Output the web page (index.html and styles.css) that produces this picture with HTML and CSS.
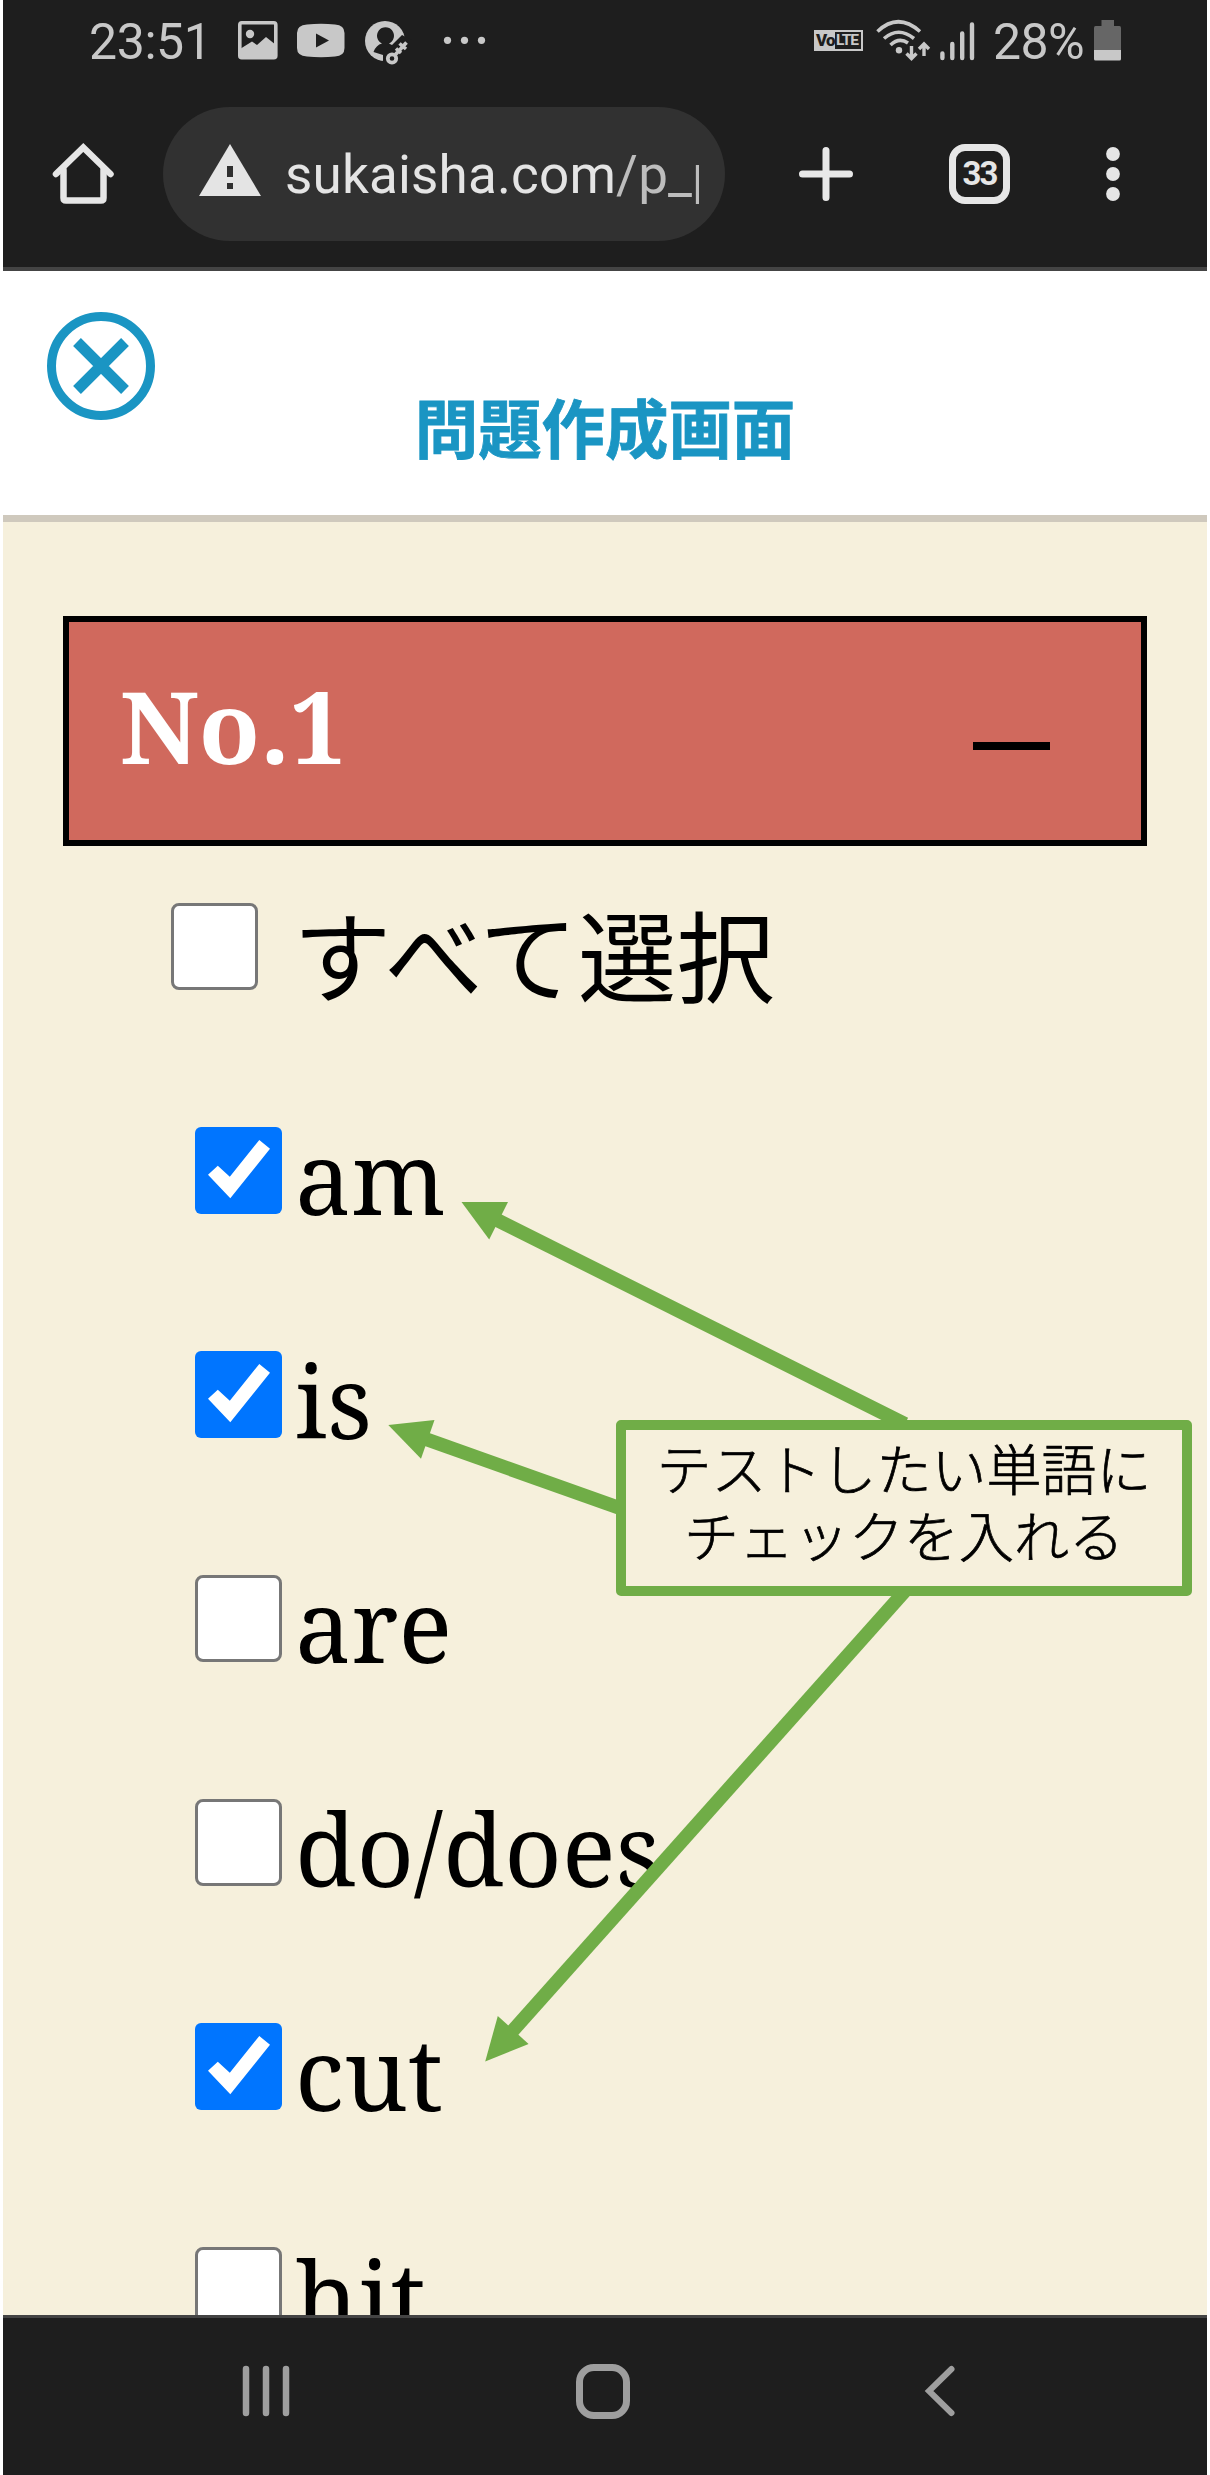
FILE: index.html
```html
<!DOCTYPE html>
<html lang="ja">
<head>
<meta charset="utf-8">
<title>問題作成画面</title>
<link rel="stylesheet" href="styles.css">
</head>
<body>
<div class="screen">
  <div class="statusbar">
    <span class="clock">23:51</span>
    <svg class="notif" width="260" height="80" viewBox="230 0 260 80">
      <rect x="239.8" y="22.8" width="36" height="35" rx="2" fill="none" stroke="#c8c8c8" stroke-width="3.6"/>
      <circle cx="250" cy="34" r="4.2" fill="#c8c8c8"/>
      <path d="M240 49 252 41.500 257 45 266 37 276 45V58H240Z" fill="#c8c8c8"/>
      <path d="M307 24.500Q321 23 335 24.500Q344.500 25 344.500 33V48Q344.500 56 335 56.500Q321 58 307 56.500Q297 56 297 48V33Q297 25 307 24.500Z" fill="#c8c8c8"/>
      <path d="M316 33.500V47.500L329 40.500Z" fill="#1e1e1e"/>
      <circle cx="385" cy="41" r="20" fill="#c8c8c8"/>
      <path d="M373.500 52Q376 45 382 43.500A8.500 8.500 0 1 1 389 43.500L392 45 402 35 412 40V66H383V55Z" fill="#1e1e1e"/>
      <circle cx="392" cy="58.500" r="4.200" fill="none" stroke="#c8c8c8" stroke-width="3.800"/>
      <path d="M395 55 406.500 42.500M399.500 43.500 406 49M396 48.500 401 53" fill="none" stroke="#c8c8c8" stroke-width="3.600"/>
      <g fill="#c8c8c8"><circle cx="447.500" cy="40.300" r="3.600"/><circle cx="464.500" cy="40.300" r="3.600"/><circle cx="481.500" cy="40.300" r="3.600"/></g>
    </svg>
    <span class="volte"><b>Vo</b><i>LTE</i></span>
    <svg class="signal" width="106" height="80" viewBox="873 0 106 80" fill="none" stroke="#c8c8c8">
      <path d="M877.500 31.500Q898 12 920 31.500M884 38.500Q898.500 26 914 38.500M890.500 45Q899 37 908 43" stroke-width="3.600"/>
      <circle cx="899" cy="50.300" r="3.200" fill="#c8c8c8" stroke="none"/>
      <path d="M911.500 46V58M906.500 53.500 911.500 58.500 916.500 53.500M924 56V44M919 49 924 44 929 49" stroke-width="3.400"/>
      <path d="M942.400 53.500V58M952.300 44V58M962.200 33.500V58M972 24.500V58" stroke-width="4.400" stroke-linecap="round"/>
    </svg>
    <span class="percent">28%</span>
    <svg class="battery" width="28" height="42" viewBox="0 0 28 42">
      <path d="M7.500 0H20V6H25.500Q27 6 27 8V30H0V8Q0 6 1.500 6H7.500Z" fill="#666"/>
      <path d="M0 30H27V39Q27 40.500 25.500 40.500H1.500Q0 40.500 0 39Z" fill="#c8c8c8"/>
    </svg>
  </div>
  <div class="toolbar">
    <svg class="home" width="64" height="64" viewBox="51 142 64 64" fill="none" stroke="#e6e6e6" stroke-width="6.500" stroke-linecap="round" stroke-linejoin="round">
      <path d="M56 174 83.300 147.500 110.500 174" stroke-linejoin="miter"/>
      <path d="M63.500 170V198Q63.500 200.500 66 200.500H101Q103.500 200.500 103.500 198V170"/>
    </svg>
    <div class="omnibox">
      <svg width="62" height="52" viewBox="0 0 62 52"><path d="M31 0 62 52H0Z" fill="#e4e4e4"/><path d="M28 22H34V33H28ZM28 39H34V45H28Z" fill="#2f2f2f"/></svg>
      <div class="url">sukaisha.com<span class="path">/p_p</span></div>
    </div>
    <svg class="plus" width="56" height="56" viewBox="0 0 56 56"><path d="M4.500 28H51.500M28 4.500V51.500" stroke="#e8e8e8" stroke-width="7" stroke-linecap="round"/></svg>
    <span class="tabs">33</span>
    <svg class="more" width="16" height="56" viewBox="0 0 16 56" fill="#e6e6e6"><circle cx="8" cy="8" r="6.900"/><circle cx="8" cy="28" r="6.900"/><circle cx="8" cy="48" r="6.900"/></svg>
  </div>
  <header class="header">
    <svg class="close" width="110" height="110" viewBox="0 0 110 110" fill="none" stroke="#1a95c3"><circle cx="55" cy="55" r="49.500" stroke-width="9"/><path d="M31 31 79 79M79 31 31 79" stroke-width="11"/></svg>
    <h1 class="title">問題作成画面</h1>
  </header>
  <main class="content">
    <div class="section"><span class="section-name">No.1</span><span class="collapse"></span></div>
    <label class="row row-all"><span class="box"></span><span class="all-text">すべて選択</span></label>
    <label class="row"><span class="box checked"><svg width="87" height="87"><path d="M13 47.800 22.800 38.700 34.800 49.800 64.300 13 75 21.800 35.300 71.200Z" fill="#fff"/></svg></span><span class="word">am</span></label>
    <label class="row"><span class="box checked"><svg width="87" height="87"><path d="M13 47.800 22.800 38.700 34.800 49.800 64.300 13 75 21.800 35.300 71.200Z" fill="#fff"/></svg></span><span class="word">is</span></label>
    <label class="row"><span class="box"></span><span class="word">are</span></label>
    <label class="row"><span class="box"></span><span class="word">do/does</span></label>
    <label class="row"><span class="box checked"><svg width="87" height="87"><path d="M13 47.800 22.800 38.700 34.800 49.800 64.300 13 75 21.800 35.300 71.200Z" fill="#fff"/></svg></span><span class="word">cut</span></label>
    <label class="row"><span class="box"></span><span class="word">hit</span></label>
  </main>
  <nav class="navbar">
    <svg width="50" height="54" viewBox="0 0 50 54" stroke="#9e9e9e" stroke-width="6.500" stroke-linecap="round"><path d="M5 5V49M25 5V49M45 5V49"/></svg>
    <span class="nav-home"></span>
    <svg width="34" height="54" viewBox="0 0 34 54" fill="none" stroke="#9e9e9e" stroke-width="6" stroke-linecap="round"><path d="M28.500 5 6 27 28.500 49"/></svg>
  </nav>
  <svg class="arrows" width="1210" height="2475" viewBox="0 0 1210 2475" fill="#70ad47" stroke="#70ad47" stroke-width="13.800">
    <path d="M492 1217.500 905 1424"/><path d="M461.500 1202H508L489.200 1239.500Z" stroke="none"/>
    <path d="M420 1437 621 1508.500"/><path d="M388.300 1425 434.500 1420 421 1458.700Z" stroke="none"/>
    <path d="M508 2036 905 1591"/><path d="M485.200 2061.500 497.800 2016 528.600 2044Z" stroke="none"/>
  </svg>
  <div class="callout"><span>テストしたい単語に</span><span>チェックを入れる</span></div>
</div>
</body>
</html>
```
FILE: styles.css
```css
* { box-sizing: border-box; }
body { margin: 0; background: #fff; }
svg { display: block; flex: none; }
.screen {
  position: relative;
  width: 1210px;
  height: 2475px;
  padding: 0 3px;
  display: flex;
  flex-direction: column;
  overflow: hidden;
}
.statusbar {
  flex: none;
  height: 80px;
  display: flex;
  padding-left: 86px;
  background: #1e1e1e;
  color: #c8c8c8;
  font-family: Roboto, sans-serif;
}
.clock, .percent { font-size: 50px; line-height: 84px; white-space: nowrap; }
.clock { width: 141px; letter-spacing: -0.4px; }
.volte {
  margin: 30px 10px 0 324px;
  width: 49px;
  height: 21px;
  display: flex;
  background: #c8c8c8;
  color: #1e1e1e;
  font: 700 17px/21px Roboto, sans-serif;
  padding-left: 2px;
}
.volte b { width: 19px; letter-spacing: -0.8px; }
.volte i {
  margin: 2px 0;
  padding-left: 1px;
  width: 26px;
  height: 17px;
  line-height: 17px;
  font-size: 15.5px;
  font-style: normal;
  letter-spacing: -1px;
  background: #1e1e1e;
  color: #c8c8c8;
}
.percent { margin-left: 14px; width: 101px; letter-spacing: -0.6px; }
.battery { margin-top: 20px; }
.toolbar {
  flex: none;
  height: 191px;
  display: flex;
  padding: 27px 0 0 48px;
  background: #1e1e1e;
  border-bottom: 4px solid #444;
  font-family: Roboto, sans-serif;
}
.home { margin-top: 35px; }
.omnibox {
  margin-left: 48px;
  width: 562px;
  height: 134px;
  border-radius: 67px;
  background: #313131;
  padding: 0 26px 0 36px;
  display: flex;
}
.omnibox svg { margin-top: 37px; }
.url {
  margin-left: 24px;
  flex: 1;
  overflow: hidden;
  white-space: nowrap;
  color: #e4e4e4;
  font-size: 53px;
  line-height: 136px;
  letter-spacing: 0.18px;
}
.path { color: #bdbdbd; }
.plus { margin: 39px 0 0 73px; }
.tabs {
  margin: 37px 0 0 95px;
  width: 61px;
  height: 60px;
  border: 7px solid #e6e6e6;
  border-radius: 16px;
  color: #e6e6e6;
  font-size: 33px;
  font-weight: 700;
  line-height: 46px;
  letter-spacing: -2px;
  text-align: center;
}
.more { margin: 39px 0 0 95px; }
.header {
  flex: none;
  height: 251px;
  display: flex;
  flex-direction: column;
  border-bottom: 7px solid #cfc9bd;
  background: #fff;
}
.close { margin: 40px 0 0 43px; }
.title {
  margin: -42px 0 0;
  text-align: center;
  font: 700 63.4px/92px "Noto Sans CJK JP", sans-serif;
  color: #1a95c3;
  -webkit-text-stroke: 0.8px #1a95c3;
}
.content {
  flex: none;
  height: 1793px;
  padding-top: 94px;
  background: #f6f0dc;
  overflow: hidden;
}
.section {
  margin: 0 60px;
  height: 230px;
  border: 6px solid #000;
  background: #d0695d;
  display: flex;
  justify-content: space-between;
  align-items: center;
  padding: 0 91px 0 51px;
}
.section-name {
  margin-top: -12px;
  color: #fff;
  font: 700 100px/200px "Noto Serif", "DejaVu Serif Condensed", "DejaVu Serif", serif;
}
.collapse { width: 77px; height: 8px; margin-top: 30px; background: #000; }
.row { display: flex; height: 224px; padding-left: 192px; }
.row-all { padding-left: 168px; margin-top: 57px; }
.box {
  flex: none;
  width: 87px;
  height: 87px;
  border: 3px solid #777;
  border-radius: 8px;
  background: #fff;
}
.checked { border: 0; background: #0075ff; border-radius: 6px; }
.word {
  margin: -21px 0 0 13px;
  height: 140px;
  font: 100px/140px "Noto Serif", "DejaVu Serif Condensed", "DejaVu Serif", serif;
}
.all-text {
  margin: -21px 0 0 35px;
  font: 98.5px/140px "Noto Sans CJK JP", sans-serif;
}
.navbar {
  flex: none;
  height: 160px;
  background: #1e1e1e;
  border-top: 3px solid #444;
  display: flex;
  padding: 46px 0 0 238px;
}
.nav-home {
  margin: 0 293px 0 285px;
  width: 54px;
  height: 55px;
  border: 7px solid #9e9e9e;
  border-radius: 18px;
}
.arrows { position: absolute; left: 0; top: 0; }
.callout {
  position: absolute;
  left: 616px;
  top: 1420px;
  width: 576px;
  height: 176px;
  border: 10px solid #70ad47;
  border-radius: 5px;
  background: #f6f0dc;
  padding-top: 3px;
  display: flex;
  flex-direction: column;
  align-items: center;
  white-space: nowrap;
  font: 300 55px/67px "Noto Sans CJK JP", sans-serif;
  -webkit-text-stroke: 0.7px #000;
}
```
